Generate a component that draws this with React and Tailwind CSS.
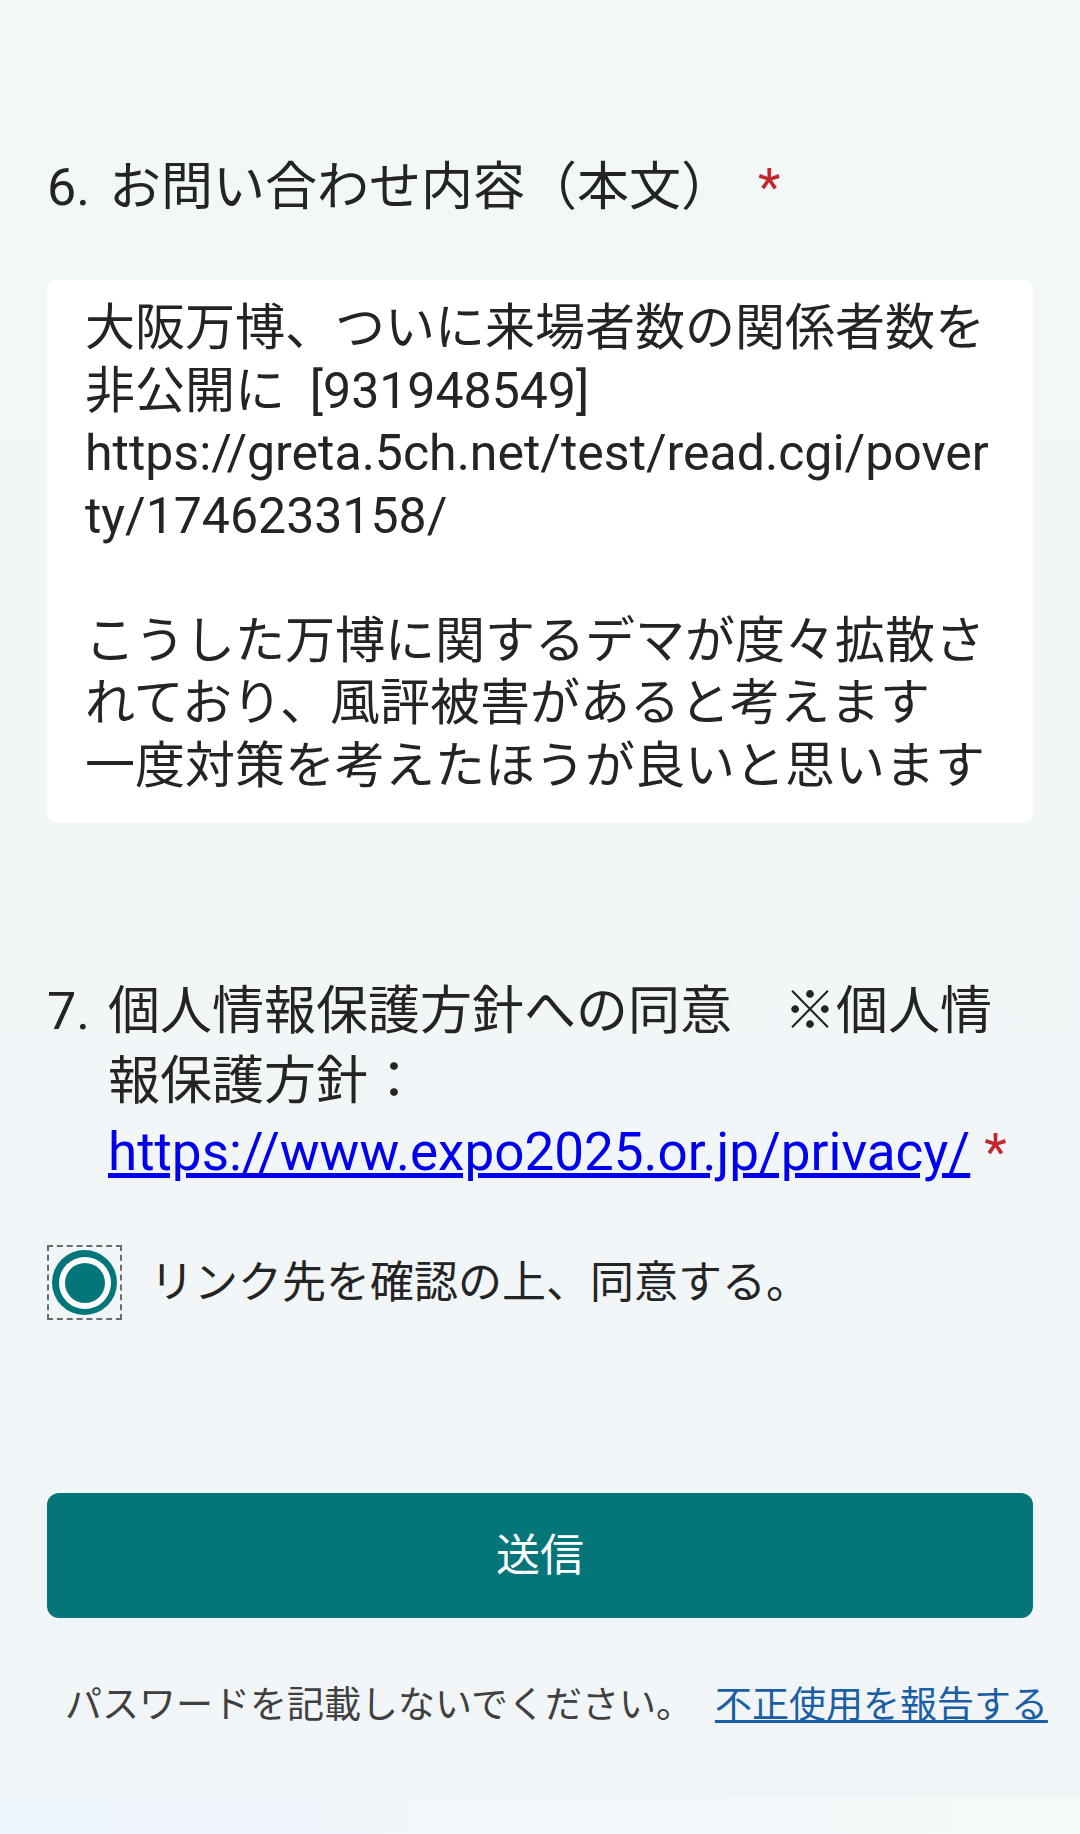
// App.jsx
import React from 'react';

const bodyLines = [
  "大阪万博、ついに来場者数の関係者数を",
  "非公開に  [931948549]",
  "https://greta.5ch.net/test/read.cgi/pover",
  "ty/1746233158/",
  "",
  "こうした万博に関するデマが度々拡散さ",
  "れており、風評被害があると考えます",
  "一度対策を考えたほうが良いと思います",
];

const Required = ({ className = "" }) => (
  <span className={`text-[#c4262e] ${className}`}>*</span>
);

const RadioChecked = () => (
  <div className="flex items-center justify-center w-[75px] h-[75px] border-2 border-dashed border-[#6b6b6b] shrink-0">
    <div className="flex items-center justify-center w-[65px] h-[65px] rounded-full bg-[#047679]">
      <div className="flex items-center justify-center w-[52px] h-[52px] rounded-full bg-white">
        <div className="w-[40px] h-[40px] rounded-full bg-[#047679]" />
      </div>
    </div>
  </div>
);

const App = () => {
  return (
    <div className="flex flex-col min-h-[1834px] bg-gradient-to-b from-[#f2f7f7] to-[#f1f5f8] font-[Roboto,'Noto_Sans_CJK_JP',sans-serif] text-[#242424]">
      <div className="flex flex-col px-[47px] pt-[153px]">
        {/* question 6 */}
        <div className="flex text-[52px] leading-[70px]">
          <span className="w-[62px] shrink-0">6.</span>
          <span>
            お問い合わせ内容（本文）
            <Required className="ml-[25px]" />
          </span>
        </div>

        <div className="mt-[57px] h-[543px] rounded-[10px] bg-white pt-[17px] pl-[38px] text-[50px] leading-[62.5px]">
          {bodyLines.map((line, i) => (
            <div key={i} className="h-[62.5px] whitespace-pre">
              {line}
            </div>
          ))}
        </div>

        {/* question 7 */}
        <div className="flex mt-[154px] text-[52px] leading-[70px]">
          <span className="w-[61px] shrink-0">7.</span>
          <span>
            個人情報保護方針への同意　※個人情
            <br />
            報保護方針：
            <br />
            <a href="#" className="text-[53px] text-[#0000ee] underline">
              https://www.expo2025.or.jp/privacy/
            </a>
            <Required className="ml-[14px]" />
          </span>
        </div>

        <div className="flex items-center mt-[57px]">
          <RadioChecked />
          <span className="ml-[28px] text-[44px] leading-[60px]">
            リンク先を確認の上、同意する。
          </span>
        </div>

        <button
          type="button"
          className="flex items-center justify-center w-full h-[125px] mt-[173px] rounded-[12px] bg-[#047679] text-white text-[44px]"
        >
          送信
        </button>

        <div className="flex items-center mt-[63px] pl-[18px] text-[37px] leading-[50px] whitespace-nowrap">
          <span className="text-[#404040]">パスワードを記載しないでください。</span>
          <a href="#" className="ml-[22px] text-[#1b5ea3] underline">
            不正使用を報告する
          </a>
        </div>
      </div>

      <div className="flex-1 mt-[66px] min-h-[39px] bg-gradient-to-r from-[#eef5fc] to-[#f5f9f9]" />
    </div>
  );
};

export default App;
